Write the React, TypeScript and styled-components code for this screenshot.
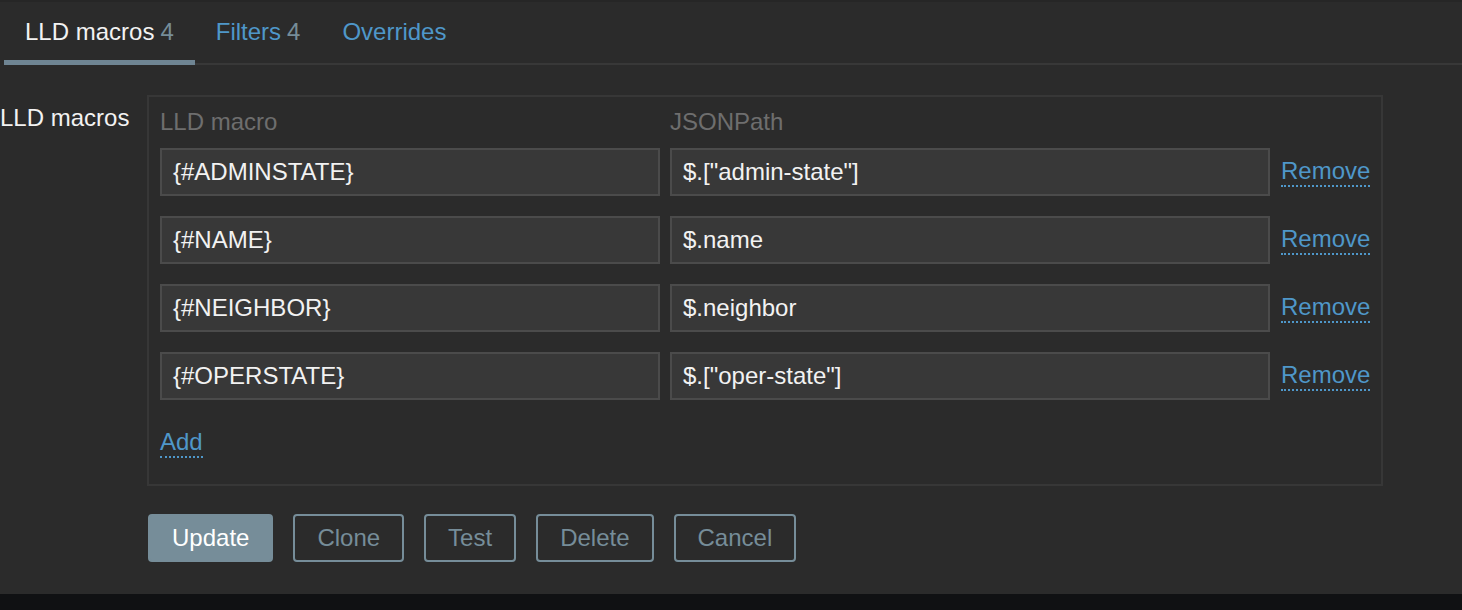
import React from "react";
import styled, { createGlobalStyle } from "styled-components";

const Global = createGlobalStyle`
  html, body { margin: 0; padding: 0; background: #101113; }
  body { font-family: "Liberation Sans", Arial, sans-serif; font-size: 24px; }
  * { box-sizing: border-box; }
`;

const Page = styled.div`
  height: 594px;
  background: #2b2b2b;
  border-top: 2px solid #262626;
  color: #f2f2f2;
`;

const TabBar = styled.div`
  display: flex;
  margin-left: 4px;
  border-bottom: 2px solid #383838;
  height: 63px;
`;

const Tab = styled.div<{ $active?: boolean }>`
  padding: 4px 21px 0;
  line-height: 52px;
  height: 63px;
  border-bottom: 5px solid ${(p) => (p.$active ? "#6f8593" : "transparent")};
  color: ${(p) => (p.$active ? "#f2f2f2" : "#4f97c9")};
  white-space: nowrap;
`;

const Count = styled.span`
  color: #768d99;
  margin-left: 6px;
`;

const FormRow = styled.div`
  display: grid;
  grid-template-columns: 147px 1236px;
  margin-top: 30px;
`;

const Label = styled.div`
  padding-top: 9px;
  line-height: 28px;
  color: #f2f2f2;
`;

const Box = styled.div`
  border: 2px solid #373737;
  padding: 11px 12px 26px 11px;
  display: grid;
  grid-template-columns: 500px 600px auto;
  column-gap: 10px;
  row-gap: 20px;
  align-items: center;
`;

const Header = styled.div`
  line-height: 28px;
  color: #6e6e6e;
  margin-bottom: -8px;
`;

const Input = styled.div`
  height: 48px;
  border: 2px solid #4b4b4b;
  background: #383838;
  padding: 0 11px;
  line-height: 44px;
  color: #f2f2f2;
  white-space: nowrap;
  overflow: hidden;
`;

const LinkText = styled.span`
  display: inline-block;
  line-height: 28px;
  color: #4f97c9;
  border-bottom: 2px dotted #4f97c9;
  justify-self: start;
  cursor: pointer;
`;

const RemoveLink = styled(LinkText)`
  margin-left: 1px;
`;

const AddCell = styled.div`
  grid-column: 1 / -1;
  padding-top: 8px;
`;

const Buttons = styled.div`
  display: flex;
  gap: 20px;
  margin: 28px 0 0 148px;
`;

const Button = styled.button<{ $primary?: boolean }>`
  height: 48px;
  padding: 0 22px;
  border-radius: 4px;
  font-family: "Liberation Sans", Arial, sans-serif;
  font-size: 24px;
  border: 2px solid #768d99;
  background: ${(p) => (p.$primary ? "#768d99" : "transparent")};
  color: ${(p) => (p.$primary ? "#ffffff" : "#768d99")};
  cursor: pointer;
`;

const rows = [
  ["{#ADMINSTATE}", '$.["admin-state"]'],
  ["{#NAME}", "$.name"],
  ["{#NEIGHBOR}", "$.neighbor"],
  ["{#OPERSTATE}", '$.["oper-state"]'],
];

export default function App() {
  return (
    <>
      <Global />
      <Page>
        <TabBar>
          <Tab $active>
            LLD macros<Count>4</Count>
          </Tab>
          <Tab>
            Filters<Count>4</Count>
          </Tab>
          <Tab>Overrides</Tab>
        </TabBar>
        <FormRow>
          <Label>LLD macros</Label>
          <Box>
            <Header>LLD macro</Header>
            <Header>JSONPath</Header>
            <div />
            {rows.map(([m, p]) => (
              <React.Fragment key={m}>
                <Input>{m}</Input>
                <Input>{p}</Input>
                <RemoveLink>Remove</RemoveLink>
              </React.Fragment>
            ))}
            <AddCell>
              <LinkText>Add</LinkText>
            </AddCell>
          </Box>
        </FormRow>
        <Buttons>
          <Button $primary>Update</Button>
          <Button>Clone</Button>
          <Button>Test</Button>
          <Button>Delete</Button>
          <Button>Cancel</Button>
        </Buttons>
      </Page>
    </>
  );
}
